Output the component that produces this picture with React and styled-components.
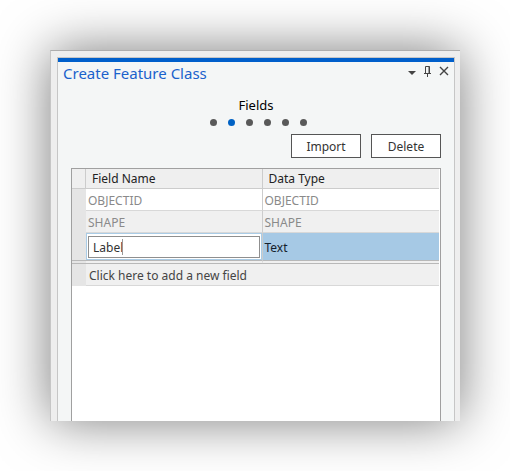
import React, { useState } from "react";
import styled, { createGlobalStyle } from "styled-components";

const GlobalStyle = createGlobalStyle`
  *, *::before, *::after { box-sizing: border-box; }
  body {
    margin: 0;
    background: #fff;
    color: #333;
    font: 12px/16px "Noto Sans", "Open Sans", sans-serif;
  }
  button, input { font: inherit; color: inherit; }
`;

const Page = styled.main`
  display: flex;
  min-height: 100vh;
  padding: 50px;
`;

const Frame = styled.div`
  display: flex;
  flex: 1;
  padding: 6px 5px 0 6px;
  background: #eee;
  border-top: 1px solid #aeaeae;
  border-left: 1px solid #c6c6c6;
  box-shadow: 0 0 50px rgba(0, 0, 0, 0.52);
`;

const Pane = styled.section`
  display: flex;
  flex-direction: column;
  flex: 1;
  min-width: 0;
  background: #f4f6f6;
  border: 1px solid #c6c6c6;
  border-bottom: 0;
`;

const TitleBar = styled.header`
  display: flex;
  align-items: center;
  justify-content: space-between;
  height: 26px;
  padding: 0 2px 0 5px;
  border-top: 4px solid #005fcb;
`;

const Title = styled.h1`
  margin: 0;
  font-size: 15px;
  line-height: 20px;
  font-weight: 400;
  color: #1a62cc;
`;

const Tools = styled.div`
  display: flex;
  margin-bottom: 4px;
`;

const ToolButton = styled.button`
  display: grid;
  place-items: center;
  width: 16px;
  height: 16px;
  padding: 0;
  border: 0;
  background: none;
  color: #444;
`;

const Step = styled.h2`
  margin: 12px 0 0;
  font-size: 13px;
  line-height: 18px;
  font-weight: 400;
  text-align: center;
  color: #000;
`;

const Dots = styled.ol`
  display: flex;
  justify-content: center;
  margin: 5px 0 0;
  padding: 0;
  list-style: none;
`;

const Dot = styled.li`
  width: 7px;
  height: 7px;
  margin: 0 3px 0 8px;
  border-radius: 50%;
  background: ${(p) => (p.$current ? "#0062c4" : "#595959")};
`;

const Actions = styled.div`
  display: flex;
  justify-content: flex-end;
  gap: 10px;
  padding: 8px 13px 10px;
`;

const Button = styled.button`
  width: 70px;
  height: 24px;
  padding: 1px 0 0;
  border: 1px solid #555;
  background: #fff;
`;

const GridBox = styled.div`
  flex: 1;
  margin: 0 13px;
  padding-right: 1px;
  background: #fff;
  border: 1px solid #a0a0a0;
  border-bottom: 0;
`;

const Table = styled.table`
  width: 100%;
  table-layout: fixed;
  border-collapse: separate;
  border-spacing: 0;
`;

const GutterCol = styled.col`
  width: 14px;
`;

const Head = styled.th`
  height: 20px;
  padding: 0 6px;
  text-align: left;
  font-weight: 400;
  color: #222;
  background: #efefef;
  border-bottom: 1px solid #ccc;
  border-right: ${(p) => (p.$last ? 0 : "1px solid #ccc")};
`;

const Row = styled.tr`
  background: ${(p) => (p.$shaded ? "#f0f0f0" : "#fff")};
`;

const Gutter = styled.td`
  padding: 0;
  background: #e5e5e5;
  border-bottom: ${(p) => (p.$end ? "4px double #b8b8b8" : "0")};
`;

const Cell = styled.td`
  height: 22px;
  padding: 2px 2px 0;
  color: #8a8a8a;
  border-bottom: 1px solid #d8d8d8;
  border-right: ${(p) => (p.$last ? 0 : "1px solid #ccc")};
`;

const EditCell = styled(Cell)`
  height: 31px;
  padding: 0;
  border-bottom: 4px double #b8b8b8;
`;

const SelectedCell = styled(Cell)`
  height: 31px;
  color: #14202c;
  background: #a6c9e5;
  background-clip: padding-box;
  border-bottom: 4px double #b8b8b8;
`;

const NewCell = styled(Cell)`
  color: #444;
  padding: 2px 3px 0;
`;

const Editor = styled.div`
  position: relative;
  padding: 2px 1px 1px;
  border: 1px solid #aacce6;
  background: #fff;
`;

const NameInput = styled.input`
  display: block;
  width: 100%;
  height: 22px;
  padding: 1px 4px 0;
  border: 1px solid #8f8f8f;
  outline: 0;
  background: #fff;
  color: #333;
  caret-color: transparent;
`;

const Caret = styled.span`
  position: absolute;
  top: 5px;
  left: 35px;
  width: 1px;
  height: 16px;
  background: #999;
`;

const steps = [1, 2, 3, 4, 5, 6];
const fixedFields = ["OBJECTID", "SHAPE"];

export default function App() {
  const [name, setName] = useState("Label");
  return (
    <>
      <GlobalStyle />
      <Page>
        <Frame>
          <Pane>
            <TitleBar>
              <Title>Create Feature Class</Title>
              <Tools>
                <ToolButton aria-label="Menu">
                  <svg width="16" height="16" viewBox="0 0 16 16">
                    <path d="M4 8h8L8 12z" fill="currentColor" />
                  </svg>
                </ToolButton>
                <ToolButton aria-label="Pin">
                  <svg width="16" height="16" viewBox="0 0 16 16" fill="none" stroke="currentColor">
                    <path d="M5.5 10V3.5h4V10M4 10.5h7M7.5 10.5V14" />
                    <path d="M9 3.5V10" />
                  </svg>
                </ToolButton>
                <ToolButton aria-label="Close">
                  <svg width="16" height="16" viewBox="0 0 16 16" fill="none" stroke="currentColor" strokeWidth="1.4">
                    <path d="M4 4l8 8M12 4l-8 8" />
                  </svg>
                </ToolButton>
              </Tools>
            </TitleBar>
            <Step>Fields</Step>
            <Dots>
              {steps.map((n) => (
                <Dot key={n} $current={n === 2} />
              ))}
            </Dots>
            <Actions>
              <Button>Import</Button>
              <Button>Delete</Button>
            </Actions>
            <GridBox>
              <Table>
                <colgroup>
                  <GutterCol />
                  <col />
                  <col />
                </colgroup>
                <thead>
                  <tr>
                    <Head />
                    <Head>Field Name</Head>
                    <Head $last>Data Type</Head>
                  </tr>
                </thead>
                <tbody>
                  {fixedFields.map((f, i) => (
                    <Row key={f} $shaded={i % 2 === 1}>
                      <Gutter />
                      <Cell>{f}</Cell>
                      <Cell $last>{f}</Cell>
                    </Row>
                  ))}
                  <Row $shaded>
                    <Gutter $end />
                    <EditCell>
                      <Editor>
                        <NameInput
                          aria-label="Field Name"
                          value={name}
                          onChange={(e) => setName(e.target.value)}
                        />
                        {name === "Label" && <Caret />}
                      </Editor>
                    </EditCell>
                    <SelectedCell $last>Text</SelectedCell>
                  </Row>
                </tbody>
                <tfoot>
                  <Row $shaded>
                    <Gutter />
                    <NewCell colSpan={2} $last>
                      Click here to add a new field
                    </NewCell>
                  </Row>
                </tfoot>
              </Table>
            </GridBox>
          </Pane>
        </Frame>
      </Page>
    </>
  );
}
